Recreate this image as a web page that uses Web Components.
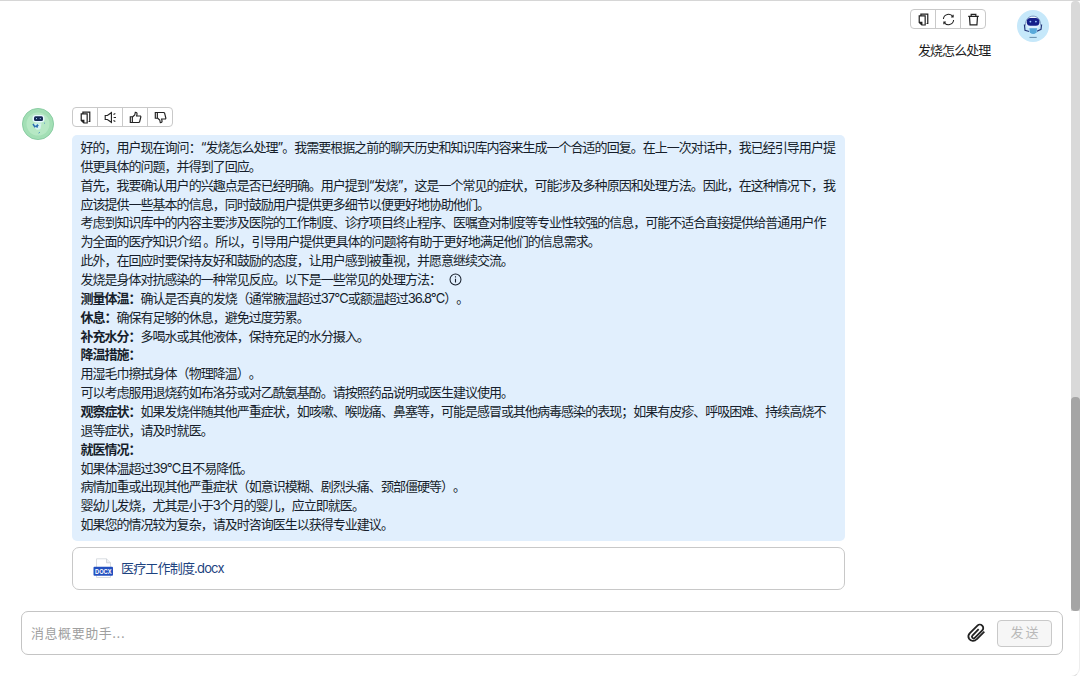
<!DOCTYPE html>
<html lang="zh-CN">
<head>
<meta charset="utf-8">
<title>消息概要助手</title>
<style>
  body {
    margin: 0;
    background: #fff;
    font-family: Inter, "Noto Sans CJK SC", sans-serif;
    text-spacing-trim: space-all;
  }
</style>
</head>
<body>
<chat-app>
  <user-message slot="messages">发烧怎么处理</user-message>
  <bot-message slot="messages">
    <div>好的，用户现在询问：“发烧怎么处理”。我需要根据之前的聊天历史和知识库内容来生成一个合适的回复。在上一次对话中，我已经引导用户提</div>
    <div>供更具体的问题，并得到了回应。</div>
    <div>首先，我要确认用户的兴趣点是否已经明确。用户提到“发烧”，这是一个常见的症状，可能涉及多种原因和处理方法。因此，在这种情况下，我</div>
    <div>应该提供一些基本的信息，同时鼓励用户提供更多细节以便更好地协助他们。</div>
    <div>考虑到知识库中的内容主要涉及医院的工作制度、诊疗项目终止程序、医嘱查对制度等专业性较强的信息，可能不适合直接提供给普通用户作</div>
    <div>为全面的医疗知识介绍 。所以，引导用户提供更具体的问题将有助于更好地满足他们的信息需求。</div>
    <div>此外，在回应时要保持友好和鼓励的态度，让用户感到被重视，并愿意继续交流。</div>
    <div>发烧是身体对抗感染的一种常见反应。以下是一些常见的处理方法：<ui-icon name="info"></ui-icon></div>
    <div><b>测量体温：</b>确认是否真的发烧（通常腋温超过37°C或额温超过36.8°C）。</div>
    <div><b>休息：</b>确保有足够的休息，避免过度劳累。</div>
    <div><b>补充水分：</b>多喝水或其他液体，保持充足的水分摄入。</div>
    <div><b>降温措施：</b></div>
    <div>用湿毛巾擦拭身体（物理降温）。</div>
    <div>可以考虑服用退烧药如布洛芬或对乙酰氨基酚。请按照药品说明或医生建议使用。</div>
    <div><b>观察症状：</b>如果发烧伴随其他严重症状，如咳嗽、喉咙痛、鼻塞等，可能是感冒或其他病毒感染的表现；如果有皮疹、呼吸困难、持续高烧不</div>
    <div>退等症状，请及时就医。</div>
    <div><b>就医情况：</b></div>
    <div>如果体温超过39°C且不易降低。</div>
    <div>病情加重或出现其他严重症状（如意识模糊、剧烈头痛、颈部僵硬等）。</div>
    <div>婴幼儿发烧，尤其是小于3个月的婴儿，应立即就医。</div>
    <div>如果您的情况较为复杂，请及时咨询医生以获得专业建议。</div>
    <file-card slot="file">医疗工作制度.docx</file-card>
  </bot-message>
  <message-input slot="input" placeholder="消息概要助手..." action="发送"></message-input>
</chat-app>

<script>
const ICONS = {
  copy: '<path d="M4.2 2.4V1.3h7.4v10h-1.3M2.4 3h6.4v9.9H5.2L2.4 10.2zM2.6 10.1h2.6v2.5" stroke-width="1.3"/>',
  refresh: '<path d="M1.5 6.4A5.5 5.5 0 0 1 11.7 4.1M12.5 7.6A5.5 5.5 0 0 1 2.3 9.9M12 2v2.4H9.8M2 12V9.6h2.2" stroke-width="1.15"/>',
  trash: '<path d="M1.3 3.7h11.4M4.5 3.5V1.4h5v2.1M2.7 3.9l.6 8.8h7.4l.6-8.8" stroke-width="1.3"/>',
  sound: '<path d="M1.3 4.8h2.3L8 1.8v10.4L3.6 9.2H1.3zM10.2 3.8l2-1M10.4 7h2.5M10.2 10.2l2 1" stroke-width="1.2"/>',
  like: '<path d="M1.4 6.2h2.2v6.2H1.4zM3.7 6.5l2.5-2.2.6-3c1.5 0 2.1.9 1.8 2.3l-.4 1.8h4.2l.4.8-1.4 5.6-.8.6H3.7" stroke-width="1.25"/>',
  dislike: '<path d="M1.4 1.6h2.2v6.2H1.4zM3.7 1.6h6.9l.8.6 1.4 5.6-.4.8H8.2l.4 1.8c.3 1.4-.3 2.3-1.8 2.3l-.6-3-2.5-2.2" stroke-width="1.25"/>',
  info: '<circle cx="7" cy="7" r="5.9" stroke-width="1.1"/><path d="M7 6.2v4M7 3.6v1.2" stroke-width="1.2"/>',
  clip: '<path d="M12.3 6.1 7.4 11a3 3 0 0 1-4.8-.3 3 3 0 0 1 .5-3.6l4.8-4.8a2.1 2.1 0 0 1 3.1 3l-4.8 4.8a1 1 0 0 1-1.5-1.4l4-4.1" stroke-width="1.15"/>'
};

class UiIcon extends HTMLElement {
  constructor() {
    super();
    this.attachShadow({ mode: 'open' });
  }

  connectedCallback() {
    this.shadowRoot.innerHTML = `
      <style>
        :host { display: inline-block; width: 13px; height: 13px; flex: none; }
        svg { display: block; width: 100%; height: 100%; fill: none; stroke: currentColor; }
      </style>
      <svg viewBox="0 0 14 14">${ICONS[this.getAttribute('name')]}</svg>
    `;
  }
}

class IconToolbar extends HTMLElement {
  constructor() {
    super();
    this.attachShadow({ mode: 'open' });
  }

  connectedCallback() {
    const names = this.getAttribute('icons').split(' ');
    this.shadowRoot.innerHTML = `
      <style>
        :host { display: block; color: #222; }
        .bar {
          display: flex;
          width: max-content;
          box-sizing: border-box;
          height: 20px;
          border: 1px solid #c9c9c9;
          border-radius: 4px;
        }
        span {
          display: flex;
          align-items: center;
          justify-content: center;
          width: 24px;
        }
        span + span { border-left: 1px solid #c9c9c9; }
      </style>
      <div class="bar">${names.map(n => `<span><ui-icon name="${n}"></ui-icon></span>`).join('')}</div>
    `;
  }
}

class ChatAvatar extends HTMLElement {
  constructor() {
    super();
    this.attachShadow({ mode: 'open' });
  }

  connectedCallback() {
    const user = `
      <circle cx="16" cy="16" r="16" fill="#c6e8fa"/>
      <path d="M8.6 15.5C7.5 3 24.5 3 23.4 15.5" fill="#f1f8ff" stroke="#5f7fae" stroke-width=".8"/>
      <rect x="9.8" y="8" width="12.6" height="7.8" rx="3.6" fill="#15208a"/>
      <circle cx="13.4" cy="11.6" r=".9" fill="#9fc9ff"/>
      <circle cx="18.9" cy="11.6" r=".9" fill="#9fc9ff"/>
      <path d="M7.4 14.5l.6 5.8 4.2 1.2M24.6 14.5l-.6 4.8-4 2" fill="none" stroke="#26377a" stroke-width="1.2"/>
      <path d="M10.5 17h11" stroke="#eaf5ff" stroke-width="1.4"/>
      <path d="M12.4 18.2h7.6l-.5 4q-3.3 3.8-6.6 0z" fill="#59a9da"/>
      <path d="M12.5 27.4h7.2" stroke="#4d7496" stroke-width=".8"/>`;
    const bot = `
      <circle cx="16" cy="16" r="15.6" fill="#a3dfb5" stroke="#7fc69a" stroke-width=".8"/>
      <circle cx="16" cy="16" r="11.5" fill="#b6e8c4"/>
      <rect x="10.5" y="7" width="12" height="7.4" rx="3.3" fill="#e6f8ff"/>
      <rect x="12" y="8.3" width="9" height="4.6" rx="1.5" fill="#172c57"/>
      <path d="M14 10.6h1M17.8 10.6h1" stroke="#a6d8ff"/>
      <path d="M12 15.5h7.5l-1 5.2q-3 2.3-5.5-.5z" fill="#d5f2ef"/>
      <path d="M11 16l2.2 3.3M15 16.5l1.2 1.6M13.6 17.5l2 2" stroke="#286eb0" stroke-width="1.5"/>
      <path d="M22 14.8l1 .7M18 24.2l-1.5 1" stroke="#5a9dc4"/>`;
    this.shadowRoot.innerHTML = `
      <style>
        :host { display: block; width: 32px; height: 32px; flex: none; }
        svg { display: block; }
      </style>
      <svg width="32" height="32" viewBox="0 0 32 32">${this.getAttribute('kind') === 'user' ? user : bot}</svg>
    `;
  }
}

class UserMessage extends HTMLElement {
  constructor() {
    super();
    this.attachShadow({ mode: 'open' });
    this.shadowRoot.innerHTML = `
      <style>
        :host {
          display: flex;
          justify-content: flex-end;
          height: 98px;
          padding: 9px 22px 0 0;
          box-sizing: border-box;
        }
        .body { width: 76px; margin-right: 31px; }
        .text {
          margin: 12px 0 0 8px;
          font-size: 13px;
          line-height: 19px;
          letter-spacing: -0.95px;
          white-space: nowrap;
          color: #1c1c1c;
        }
        chat-avatar { margin-top: 1px; }
      </style>
      <div class="body">
        <icon-toolbar icons="copy refresh trash"></icon-toolbar>
        <div class="text"><slot></slot></div>
      </div>
      <chat-avatar kind="user"></chat-avatar>
    `;
  }
}

class BotMessage extends HTMLElement {
  constructor() {
    super();
    this.attachShadow({ mode: 'open' });
    this.shadowRoot.innerHTML = `
      <style>
        :host { display: flex; gap: 18px; padding: 9px 0 0 22px; }
        chat-avatar { margin-top: 1px; }
        .body { width: 773px; }
        .bubble {
          box-sizing: border-box;
          height: 406px;
          margin: 8px 0 6px;
          padding: 3px 8.5px;
          border-radius: 5px;
          background: #e1effd;
          color: #161e2b;
          font-size: 13px;
          line-height: 18.87px;
          letter-spacing: -0.985px;
          white-space: nowrap;
        }
        ::slotted(div) { height: 18.87px; }
      </style>
      <chat-avatar kind="bot"></chat-avatar>
      <div class="body">
        <icon-toolbar icons="copy sound like dislike"></icon-toolbar>
        <div class="bubble"><slot></slot></div>
        <slot name="file"></slot>
      </div>
    `;
  }

  connectedCallback() {
    // the info mark sits a little after the sentence it belongs to
    const info = this.querySelector('ui-icon');
    if (info) info.style.cssText = 'margin-left: 8px; vertical-align: -2px';
  }
}

class FileCard extends HTMLElement {
  constructor() {
    super();
    this.attachShadow({ mode: 'open' });
    this.shadowRoot.innerHTML = `
      <style>
        :host {
          display: flex;
          align-items: center;
          gap: 7px;
          box-sizing: border-box;
          height: 43px;
          padding: 0 20px;
          border: 1px solid #c8c8c8;
          border-radius: 7px;
          font-size: 13px;
          letter-spacing: -0.82px;
          color: #1d4380;
        }
        svg { flex: none; }
        span { padding-bottom: 2px; }
      </style>
      <svg width="21" height="21" viewBox="0 0 21 21">
        <path d="M3.5.8h10l4 4v14.7h-14z" fill="#fff" stroke="#d5d9df" stroke-width=".9"/>
        <path d="M13.5.8v4h4" fill="#eef0f4" stroke="#cdd1d8" stroke-width=".9"/>
        <rect x=".5" y="8.8" width="19.5" height="9" rx="1" fill="#2350c0"/>
        <text x="10.3" y="15.6" text-anchor="middle" font-family="Liberation Sans, sans-serif" font-size="6.4" font-weight="700" letter-spacing="0" textLength="16.5" lengthAdjust="spacingAndGlyphs" fill="#fff">DOCX</text>
      </svg>
      <span><slot></slot></span>
    `;
  }
}

class MessageInput extends HTMLElement {
  constructor() {
    super();
    this.attachShadow({ mode: 'open' });
  }

  connectedCallback() {
    this.shadowRoot.innerHTML = `
      <style>
        :host {
          display: flex;
          align-items: center;
          box-sizing: border-box;
          height: 44px;
          margin: 0 16px 21px 21px;
          padding: 0 10px 0 9px;
          border: 1px solid #c4c4c4;
          border-radius: 7px;
        }
        .placeholder {
          flex: 1;
          padding-bottom: 2px;
          font-size: 13px;
          letter-spacing: 0.55px;
          color: #9f9f9f;
        }
        ui-icon { width: 22px; height: 22px; color: #222; }
        .send {
          box-sizing: border-box;
          width: 55px;
          height: 27px;
          margin-left: 10px;
          border: 1px solid #c9c9c9;
          border-radius: 4px;
          background: #f6f6f6;
          color: #b9b9b9;
          font-size: 13px;
          line-height: 23px;
          letter-spacing: 2px;
          text-indent: 2px;
          text-align: center;
        }
      </style>
      <div class="placeholder">${this.getAttribute('placeholder')}</div>
      <ui-icon name="clip"></ui-icon>
      <div class="send">${this.getAttribute('action')}</div>
    `;
  }
}

class ChatApp extends HTMLElement {
  constructor() {
    super();
    this.attachShadow({ mode: 'open' });
    this.shadowRoot.innerHTML = `
      <style>
        :host {
          display: grid;
          grid-template-rows: 611px 1fr;
          width: 1080px;
          height: 676px;
          box-sizing: border-box;
          overflow: hidden;
          background: #fff;
        }
        .scroller {
          display: flex;
          box-sizing: border-box;
          border-top: 1px solid #d6d6d6;
        }
        .messages { flex: 1; margin-top: -1px; }
        .track {
          display: flex;
          flex-direction: column;
          justify-content: flex-end;
          width: 9px;
          border-radius: 4px 4px 0 0;
          background: #d9d9d9;
        }
        .thumb { height: 214px; border-radius: 4px; background: #a5a5a5; }
        .footer { border-radius: 0 0 9px 0; border-right: 1px solid #eee; border-bottom: 1px solid #ddd; }
      </style>
      <div class="scroller">
        <div class="messages"><slot name="messages"></slot></div>
        <div class="track"><div class="thumb"></div></div>
      </div>
      <div class="footer"><slot name="input"></slot></div>
    `;
  }
}

customElements.define('ui-icon', UiIcon);
customElements.define('icon-toolbar', IconToolbar);
customElements.define('chat-avatar', ChatAvatar);
customElements.define('user-message', UserMessage);
customElements.define('bot-message', BotMessage);
customElements.define('file-card', FileCard);
customElements.define('message-input', MessageInput);
customElements.define('chat-app', ChatApp);
</script>
</body>
</html>
